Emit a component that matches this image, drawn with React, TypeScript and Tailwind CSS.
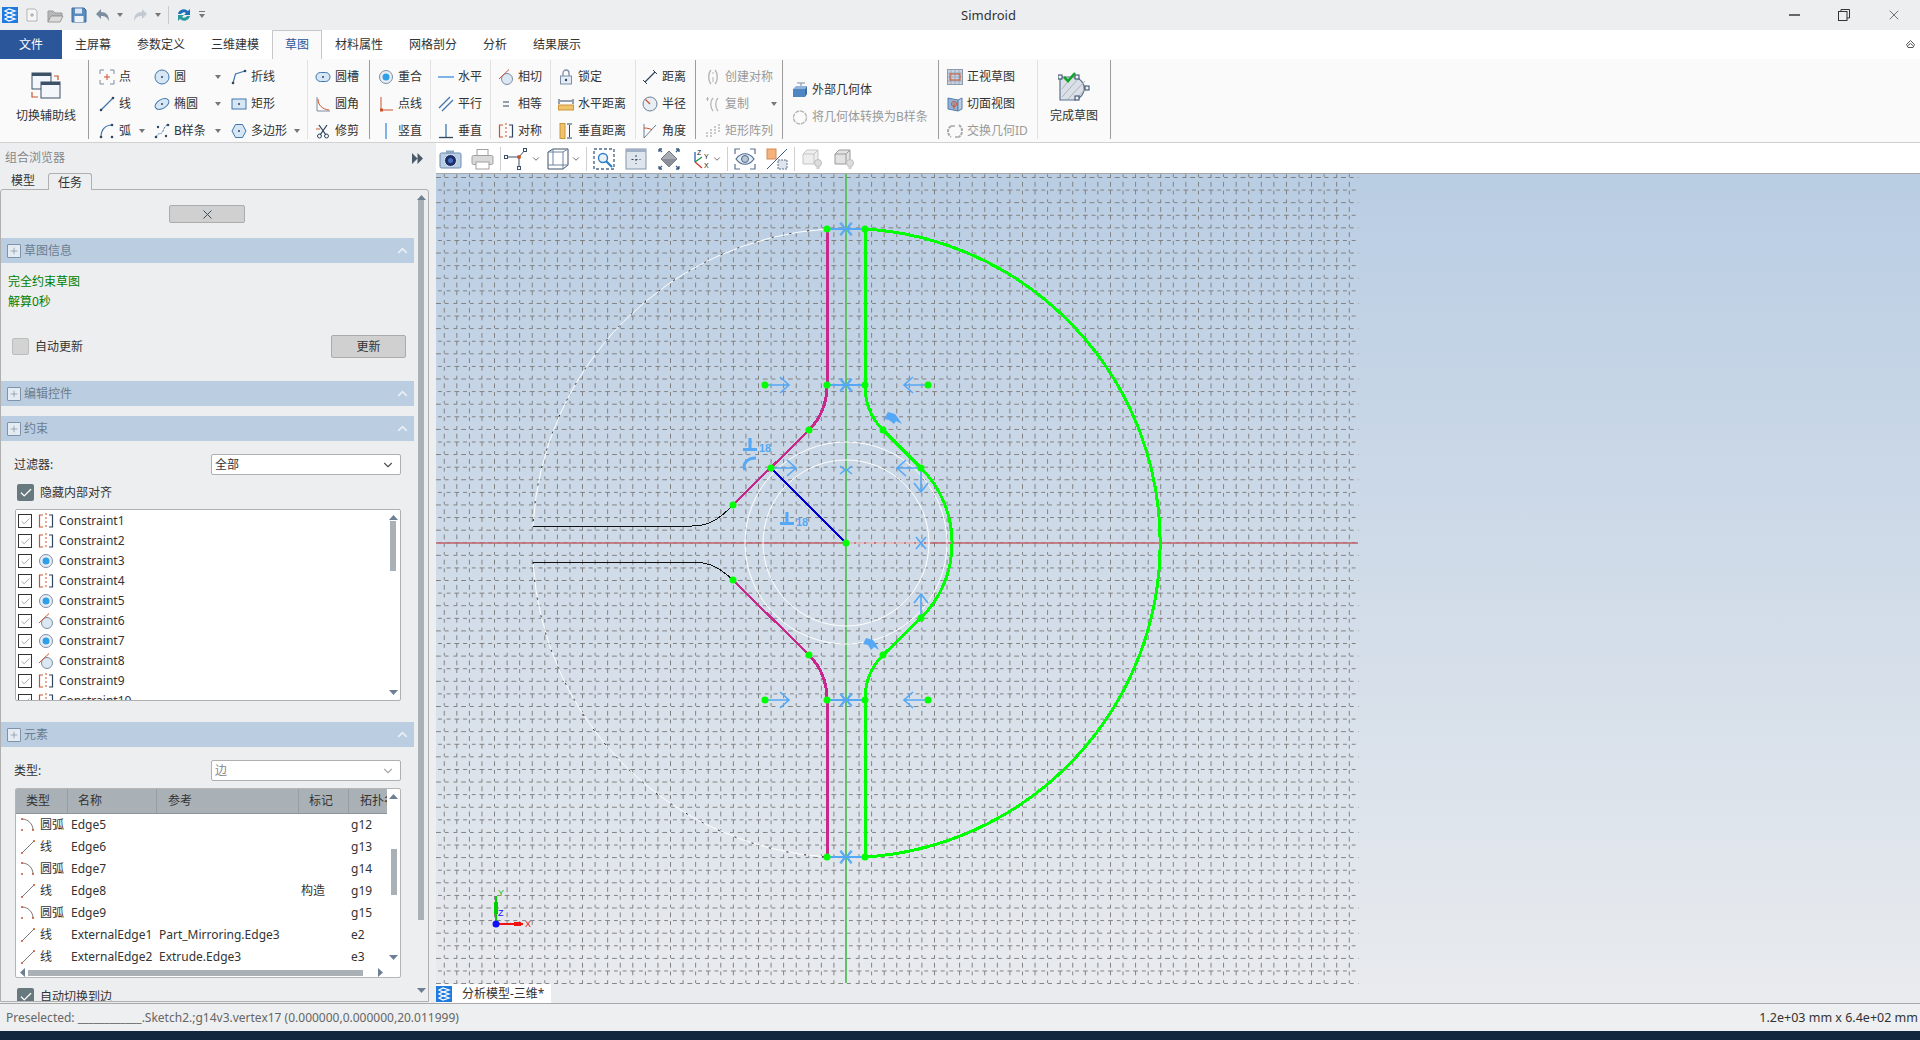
import React from 'react';
import { ChevronDown, ChevronUp, Check, X, Plus } from 'lucide-react';

const BLUE = '#3f76ad';
const ORANGE = '#c9542b';
const DARK = '#2f4560';
const CONSTRAINT = '#55a8f5';

type IconProps = { children: React.ReactNode; size?: number; box?: number; className?: string };

const Ico = ({ children, size = 16, box = 16, className = '' }: IconProps) => (
  <svg width={size} height={size} viewBox={`0 0 ${box} ${box}`} fill="none" className={`shrink-0 ${className}`}>
    {children}
  </svg>
);

const Caret = ({ className = '' }: { className?: string }) => (
  <svg width="6" height="4" viewBox="0 0 6 4" className={`shrink-0 ${className}`}>
    <path d="M0 0h6L3 4z" fill="#777" />
  </svg>
);

// ---- sketch ribbon icons ----
const PointIcon = () => (
  <Ico>
    <path d="M1 5V1h4M11 1h4v4M15 11v4h-4M5 15H1v-4" stroke="#7d8da0" />
    <path d="M8 5v6M5 8h6" stroke={ORANGE} />
  </Ico>
);
const CircleIcon = () => (
  <Ico>
    <circle cx="8" cy="8" r="7" fill="#d7e6f5" stroke={BLUE} />
    <circle cx="8" cy="8" r="1" fill={DARK} />
  </Ico>
);
const PolylineIcon = () => (
  <Ico>
    <path d="M2 14 4.500 5 14 2" stroke={BLUE} strokeWidth="1.200" />
    <circle cx="2" cy="14" r="1.300" fill={DARK} />
    <circle cx="14" cy="2" r="1.300" fill={DARK} />
  </Ico>
);
const LineIcon = () => (
  <Ico>
    <path d="M2 14 14 2" stroke={BLUE} strokeWidth="1.200" />
    <circle cx="2" cy="14" r="1.300" fill={DARK} />
    <circle cx="14" cy="2" r="1.300" fill={DARK} />
  </Ico>
);
const EllipseIcon = () => (
  <Ico>
    <ellipse cx="8" cy="8" rx="7.500" ry="4.500" transform="rotate(-30 8 8)" fill="#d7e6f5" stroke={BLUE} />
    <circle cx="8" cy="8" r="1" fill={DARK} />
  </Ico>
);
const RectIcon = () => (
  <Ico>
    <rect x="1" y="3" width="14" height="10" fill="#d7e6f5" stroke={BLUE} />
    <circle cx="8" cy="8" r="1" fill={DARK} />
  </Ico>
);
const ArcIcon = () => (
  <Ico>
    <path d="M2 14C2 7 6 2 13 2" stroke={BLUE} strokeWidth="1.200" />
    <circle cx="2" cy="14" r="1.300" fill={DARK} />
    <circle cx="13" cy="14" r="1.300" fill={DARK} />
    <circle cx="13" cy="2" r="1.300" fill={DARK} />
  </Ico>
);
const SplineIcon = () => (
  <Ico>
    <path d="M2 14C5 8 7 13 9 8s3-6 5-6" stroke={BLUE} strokeDasharray="2 1" />
    <circle cx="2" cy="14" r="1.300" fill={DARK} />
    <circle cx="14" cy="2" r="1.300" fill={DARK} />
    <circle cx="4" cy="4" r="1.200" fill={DARK} />
    <circle cx="12" cy="13" r="1.200" fill={DARK} />
  </Ico>
);
const PolygonIcon = () => (
  <Ico>
    <path d="M4.500 1.500h7L15 8l-3.500 6.500h-7L1 8z" fill="#d7e6f5" stroke={BLUE} />
    <circle cx="8" cy="8" r="1" fill={DARK} />
  </Ico>
);
const SlotIcon = () => (
  <Ico>
    <rect x="1" y="3.500" width="14" height="9" rx="4.500" fill="#d7e6f5" stroke={BLUE} />
    <circle cx="8" cy="8" r="1" fill={DARK} />
  </Ico>
);
const FilletIcon = () => (
  <Ico>
    <path d="M2 1v14h13" stroke="#7d8da0" />
    <path d="M3 3c0 6 4 10 11 11" stroke={ORANGE} />
  </Ico>
);
const TrimIcon = () => (
  <Ico>
    <path d="M4 2l7 10M12 2 5 12" stroke={DARK} strokeWidth="1.300" />
    <circle cx="4.500" cy="13" r="2" stroke={DARK} />
    <circle cx="11.500" cy="13" r="2" stroke={DARK} />
    <path d="M1 6h4" stroke={ORANGE} />
  </Ico>
);
const CoincidentIcon = () => (
  <Ico>
    <circle cx="8" cy="8" r="6.500" fill="#e9eef4" stroke="#7c8ea3" />
    <circle cx="8" cy="8" r="3.500" fill="#2f9fe8" />
  </Ico>
);
const PointLineIcon = () => (
  <Ico>
    <path d="M3 1v13h12" stroke={ORANGE} />
    <rect x="2" y="12.500" width="3" height="3" fill={ORANGE} />
  </Ico>
);
const VerticalIcon = () => (
  <Ico>
    <rect x="7" y="0" width="2" height="16" fill="#7db3e6" />
  </Ico>
);
const HorizontalIcon = () => (
  <Ico>
    <rect x="0" y="7" width="16" height="2" fill="#7db3e6" />
  </Ico>
);
const ParallelIcon = () => (
  <Ico>
    <path d="M1 12 12 1M4 15 15 4" stroke={BLUE} strokeWidth="1.300" />
  </Ico>
);
const PerpIcon = () => (
  <Ico>
    <path d="M8 1v13" stroke={BLUE} strokeWidth="1.300" />
    <path d="M1 14.500h14" stroke={DARK} strokeWidth="1.300" />
  </Ico>
);
const TangentIcon = () => (
  <Ico>
    <circle cx="9" cy="10" r="5.500" fill="#dbe7f3" stroke="#7c8ea3" />
    <path d="M1 10 11 0.500" stroke={ORANGE} />
  </Ico>
);
const EqualIcon = () => (
  <Ico>
    <path d="M5 6h6M5 10h6" stroke={DARK} />
  </Ico>
);
const SymmetryIcon = () => (
  <Ico>
    <path d="M5 2H1.500v12H5" stroke={ORANGE} strokeWidth="1.200" />
    <path d="M11 2h3.500v12H11" stroke={DARK} strokeWidth="1.200" />
    <path d="M8 0v16" stroke={ORANGE} strokeDasharray="2 2" />
  </Ico>
);
const LockIcon = () => (
  <Ico>
    <path d="M5 7V4a3 3 0 0 1 6 0v3" stroke="#7c8ea3" strokeWidth="1.300" />
    <rect x="2.500" y="7" width="11" height="8" fill="#e4ecf5" stroke="#7c8ea3" />
    <circle cx="8" cy="11" r="1.200" fill={DARK} />
  </Ico>
);
const HDistIcon = () => (
  <Ico>
    <path d="M1 3v5M15 3v5M2 5h12" stroke={DARK} />
    <rect x="0.500" y="9" width="15" height="5" fill="#f0c36a" stroke="#c9963a" />
  </Ico>
);
const VDistIcon = () => (
  <Ico>
    <rect x="2" y="0.500" width="5" height="15" fill="#f0c36a" stroke="#c9963a" />
    <path d="M9 1h5M9 15h5M11.500 2v12" stroke={DARK} />
  </Ico>
);
const DistIcon = () => (
  <Ico>
    <path d="M3 13 13 3" stroke={DARK} strokeWidth="1.200" />
    <path d="M1 11l4 4M11 1l4 4" stroke={DARK} />
  </Ico>
);
const RadiusIcon = () => (
  <Ico>
    <circle cx="8" cy="8" r="7" fill="#e9eef4" stroke="#6d7f92" />
    <path d="M8 8 3.500 3.500" stroke={ORANGE} strokeWidth="1.200" />
  </Ico>
);
const AngleIcon = () => (
  <Ico>
    <path d="M2 1v14M2 15 14 2" stroke="#6d7f92" />
    <path d="M2 5c4 0 7 1 8 2" stroke={ORANGE} />
  </Ico>
);
const GreyArcs = () => (
  <Ico>
    <path d="M6 1C3 4 3 12 6 15M10 1c3 3 3 11 0 14" stroke="#b5b5b5" strokeWidth="1.300" />
    <path d="M8 3v2M8 8v5" stroke="#b5b5b5" />
  </Ico>
);
const GreyCopy = () => (
  <Ico>
    <path d="M8 2C5 5 5 11 8 15M13 2c-3 3-3 9 0 13" stroke="#b5b5b5" strokeWidth="1.300" />
    <path d="M1 3h3M2.500 1v4" stroke="#b5b5b5" />
  </Ico>
);
const GreyArray = () => (
  <Ico>
    <path d="M2 9v6M6 6v9M10 3v9M14 1v9" stroke="#b5b5b5" strokeDasharray="2 1" strokeWidth="1.400" />
  </Ico>
);
const ExternalIcon = () => (
  <Ico>
    <path d="M1 7l3-3h11l-2 3z" fill="#8fb3da" />
    <rect x="1" y="7" width="12" height="8" fill="#4f85c0" />
    <path d="M13 7l2-3v8l-2 3z" fill="#3a6ca3" />
    <path d="M5 1h8M9 1v3" stroke="#7c8ea3" />
  </Ico>
);
const GreyCircleIcon = () => (
  <Ico>
    <circle cx="8" cy="8.500" r="6.500" stroke="#b5b5b5" strokeWidth="1.400" strokeDasharray="4 1" />
  </Ico>
);
const FrontViewIcon = () => (
  <Ico>
    <rect x="0.500" y="0.500" width="15" height="15" fill="#c9d3e0" stroke="#8b9bb0" />
    <path d="M4 1v14M8 1v14M12 1v14M1 4h14M1 8h14M1 12h14" stroke="#9babc0" />
    <rect x="3" y="5" width="10" height="6" stroke={ORANGE} />
  </Ico>
);
const SectionIcon = () => (
  <Ico>
    <path d="M1 2l10 2v11L1 13z" fill="#8fb3da" stroke="#5a7fa8" />
    <path d="M11 4l4-2v11l-4 2z" fill="#b9cde3" stroke="#5a7fa8" />
    <circle cx="7" cy="8" r="2.500" stroke={ORANGE} />
    <path d="M7 7v6" stroke={ORANGE} />
  </Ico>
);
const SwapIcon = () => (
  <Ico>
    <path d="M4 3C0 6 0 11 4 14M12 2c4 3 4 9 0 12" stroke="#a8a8a8" strokeWidth="2" strokeDasharray="3 1" />
    <path d="M4 3h4M8 14h4" stroke="#a8a8a8" strokeWidth="1.400" />
  </Ico>
);
const ToggleIcon = () => (
  <svg width="30" height="28" viewBox="0 0 30 28" fill="none" className="shrink-0">
    <rect x="1" y="1" width="19" height="16" fill="#f3f6fa" stroke="#3c5068" />
    <rect x="1" y="1" width="19" height="3" fill="#3c5068" />
    <rect x="10" y="10" width="19" height="16" fill="#f3f6fa" stroke="#3c5068" />
    <rect x="10" y="10" width="19" height="3" fill="#3c5068" />
    <path d="M23 4h4v4" stroke={ORANGE} strokeWidth="1.200" />
    <path d="M1 20v5h6" stroke={ORANGE} strokeWidth="1.200" />
  </svg>
);
const FinishIcon = () => (
  <svg width="32" height="30" viewBox="0 0 32 30" fill="none" className="shrink-0">
    <path d="M2 6h15a13 12 0 0 1 0 23H2z" fill="#dbe0e7" stroke="#5b7190" strokeWidth="1.200" />
    <path d="M4 18 12 8M4 26 20 8M10 28 27 10M18 28 29 16" stroke="#a9b3bf" />
    <rect x="0" y="4" width="4" height="4" fill="#eef2f7" stroke={DARK} />
    <rect x="17" y="4" width="4" height="4" fill="#eef2f7" stroke={DARK} />
    <rect x="27" y="15" width="4" height="4" fill="#eef2f7" stroke={DARK} />
    <rect x="17" y="25" width="4" height="4" fill="#eef2f7" stroke={DARK} />
    <path d="M6 6l4 4 7-8" stroke="#12a329" strokeWidth="2.600" />
  </svg>
);

// ---- viewport toolbar icons ----
const CameraIcon = () => (
  <Ico size={23} box={23} className="ml-[3px]">
    <rect x="1" y="5" width="21" height="15" rx="1.500" fill="#b9cde3" stroke="#6a8bb0" />
    <rect x="7" y="2.500" width="8" height="3" fill="#8aa6c6" />
    <circle cx="11.500" cy="12.500" r="6" fill="#1c2f68" stroke="#dfe8f2" />
    <circle cx="11.500" cy="12.500" r="2.500" fill="#4c6fc0" />
  </Ico>
);
const PrinterIcon = () => (
  <Ico size={23} box={23} className="ml-[9px]">
    <rect x="6" y="1.500" width="11" height="6" fill="#fff" stroke="#a0a0a0" />
    <rect x="1" y="7.500" width="21" height="9" rx="1.500" fill="#d9d9d9" stroke="#a0a0a0" />
    <rect x="5" y="14" width="13" height="7" fill="#fff" stroke="#a0a0a0" />
  </Ico>
);
const NodeIcon = () => (
  <Ico size={24} box={24} className="ml-[3px]">
    <path d="M2 10h13v11M15 10l6-7" stroke="#3c5068" />
    <rect x="0.500" y="8.500" width="3" height="3" fill="#fff" stroke="#3c5068" />
    <rect x="13.500" y="19.500" width="3" height="3" fill="#fff" stroke="#3c5068" />
    <rect x="19.500" y="1.500" width="3" height="3" fill="#fff" stroke="#3c5068" />
    <circle cx="15" cy="10" r="2" fill={ORANGE} />
  </Ico>
);
const BoxIcon = () => (
  <Ico size={22} box={22} className="ml-[6px]">
    <path d="M1 4l5-3h15v16l-5 4H1z" stroke="#3c5068" />
    <path d="M1 4h15v17M16 4l5-3M6 1v16H1M6 17h15" stroke="#6d84a0" />
  </Ico>
);
const ZoomBoxIcon = () => (
  <Ico size={22} box={22} className="ml-[6px]">
    <rect x="1" y="1" width="20" height="20" stroke="#4e6a8c" strokeDasharray="3 2" strokeWidth="1.400" />
    <circle cx="10" cy="10" r="4.500" fill="#e8f0f8" stroke="#2f7fc4" strokeWidth="1.400" />
    <path d="M13 13l6 6" stroke="#2f7fc4" strokeWidth="2.200" />
  </Ico>
);
const FitIcon = () => (
  <Ico size={22} box={22} className="ml-[10px]">
    <rect x="1" y="1" width="20" height="20" fill="#dfe5ed" stroke="#8095ad" />
    <rect x="1" y="1" width="20" height="3" fill="#9fb0c4" />
    <path d="M11 7v9M6.500 11.500h9" stroke={DARK} strokeDasharray="2 2" />
  </Ico>
);
const DiamondIcon = () => (
  <Ico size={22} box={22} className="ml-[11px]">
    <path d="M11 3l8 8-8 8-8-8z" fill="#a9adb3" stroke="#6f7680" />
    <path d="M3 11h16l-8 8z" fill="#8b9098" />
    <path d="M1 1l3 3M21 1l-3 3M1 21l3-3M21 21l-3-3M1 1h3M1 1v3M21 1h-3M21 1v3M1 21h3M1 21v-3M21 21h-3M21 21v-3" stroke="#3c5d85" strokeWidth="1.300" />
  </Ico>
);
const TriadIcon = () => (
  <svg width="20" height="22" viewBox="0 0 20 22" fill="none" className="shrink-0 ml-[11px]">
    <path d="M4 14V4" stroke="#2563b5" strokeWidth="1.300" />
    <path d="M4 14l7-5" stroke="#1a9a3a" strokeWidth="1.300" />
    <path d="M4 14l7 6" stroke="#d9302a" strokeWidth="1.300" />
    <text x="6" y="7" fontSize="7" fill="#222" fontFamily="Liberation Sans">Z</text>
    <text x="13" y="11" fontSize="7" fill="#222" fontFamily="Liberation Sans">Y</text>
    <text x="13" y="20" fontSize="7" fill="#222" fontFamily="Liberation Sans">X</text>
  </svg>
);
const EyeIcon = () => (
  <Ico size={22} box={22} className="ml-[6px]">
    <path d="M1 6V1h5M16 1h5v5M21 16v5h-5M6 21H1v-5" stroke="#5b7190" strokeWidth="1.200" />
    <path d="M2 11c5-7 13-7 18 0-5 7-13 7-18 0z" fill="#e4ecf5" stroke="#4e6a8c" strokeWidth="1.200" />
    <circle cx="11" cy="11" r="3.500" fill="#b8c6d6" stroke="#4e6a8c" />
  </Ico>
);
const SwapShadeIcon = () => (
  <Ico size={22} box={22} className="ml-[10px]">
    <rect x="1" y="1" width="9" height="10" fill="#f3b27e" stroke="#d58a4f" />
    <path d="M1 21 21 1" stroke="#3c5d85" />
    <rect x="12" y="12" width="9" height="9" fill="#dfe5ed" stroke="#5b7190" strokeDasharray="2 1" />
  </Ico>
);
const GhostCube = ({ className = '', dark }: { className?: string; dark?: boolean }) => (
  <Ico size={22} box={22} className={className}>
    <path d="M2 6l4-4h11v11l-4 3H2z" fill={dark ? '#e2e2e2' : '#eeeeee'} stroke={dark ? '#9a9a9a' : '#c5c5c5'} />
    <path d="M2 6h11v10M13 6l4-4" stroke={dark ? '#9a9a9a' : '#c5c5c5'} />
    <circle cx="17" cy="15" r="3.500" fill="#dddddd" stroke="#bdbdbd" />
    <rect x="15.500" y="18" width="3" height="3" fill="#cccccc" />
  </Ico>
);

// ---- app logo ----
const AppLogo = ({ size = 16 }: { size?: number }) => (
  <svg width={size} height={size} viewBox="0 0 16 16" className="shrink-0">
    <rect width="16" height="16" fill="#1f7ae0" />
    <path d="M3 4l4-2 6 2-6 2zM3 8l4-2 6 2-6 2zM3 12l4-2 6 2-6 2z" fill="none" stroke="#fff" strokeWidth="1.200" />
  </svg>
);

// ---- ribbon parts ----
const Item = ({ icon, label, muted, children }: { icon: React.ReactNode; label: string; muted?: boolean; children?: React.ReactNode }) => (
  <div className={`flex items-center gap-[4px] h-[27px] shrink-0 whitespace-nowrap ${muted ? 'text-[#999999]' : 'text-[#333333]'}`}>
    {icon}
    <span>{label}</span>
    {children}
  </div>
);

const Group = ({ width, dark, children }: { width: string; dark?: boolean; children: React.ReactNode }) => (
  <div className={`flex h-[79px] pt-[3px] border-r shrink-0 ${width} ${dark ? 'border-[#9c9c9c]' : 'border-[#e2e2e2]'}`}>
    {children}
  </div>
);

const Ribbon = () => (
  <div className="flex h-[85px] shrink-0 bg-[#fafafa] border-y border-[#d0d0d0] pt-px">
    <Group width="w-[89px]" dark>
      <div className="flex flex-col items-center w-full pt-[9px] pl-[4px] gap-[8px]">
        <ToggleIcon />
        <span className="text-[#333333]">切换辅助线</span>
      </div>
    </Group>
    <Group width="w-[219px]">
      <div className="flex flex-col w-[65px] pl-[10px]">
        <Item icon={<PointIcon />} label="点" />
        <Item icon={<LineIcon />} label="线" />
        <Item icon={<ArcIcon />} label="弧"><Caret className="ml-auto mr-[9px]" /></Item>
      </div>
      <div className="flex flex-col w-[77px]">
        <Item icon={<CircleIcon />} label="圆"><Caret className="ml-auto mr-[10px]" /></Item>
        <Item icon={<EllipseIcon />} label="椭圆"><Caret className="ml-auto mr-[10px]" /></Item>
        <Item icon={<SplineIcon />} label="B样条"><Caret className="ml-auto mr-[10px]" /></Item>
      </div>
      <div className="flex flex-col flex-1">
        <Item icon={<PolylineIcon />} label="折线" />
        <Item icon={<RectIcon />} label="矩形" />
        <Item icon={<PolygonIcon />} label="多边形"><Caret className="ml-auto mr-[7px]" /></Item>
      </div>
    </Group>
    <Group width="w-[62px]" dark>
      <div className="flex flex-col pl-[7px]">
        <Item icon={<SlotIcon />} label="圆槽" />
        <Item icon={<FilletIcon />} label="圆角" />
        <Item icon={<TrimIcon />} label="修剪" />
      </div>
    </Group>
    <Group width="w-[61px]">
      <div className="flex flex-col pl-[8px]">
        <Item icon={<CoincidentIcon />} label="重合" />
        <Item icon={<PointLineIcon />} label="点线" />
        <Item icon={<VerticalIcon />} label="竖直" />
      </div>
    </Group>
    <Group width="w-[60px]">
      <div className="flex flex-col pl-[7px]">
        <Item icon={<HorizontalIcon />} label="水平" />
        <Item icon={<ParallelIcon />} label="平行" />
        <Item icon={<PerpIcon />} label="垂直" />
      </div>
    </Group>
    <Group width="w-[60px]">
      <div className="flex flex-col pl-[7px]">
        <Item icon={<TangentIcon />} label="相切" />
        <Item icon={<EqualIcon />} label="相等" />
        <Item icon={<SymmetryIcon />} label="对称" />
      </div>
    </Group>
    <Group width="w-[85px]">
      <div className="flex flex-col pl-[7px]">
        <Item icon={<LockIcon />} label="锁定" />
        <Item icon={<HDistIcon />} label="水平距离" />
        <Item icon={<VDistIcon />} label="垂直距离" />
      </div>
    </Group>
    <Group width="w-[60px]" dark>
      <div className="flex flex-col pl-[6px]">
        <Item icon={<DistIcon />} label="距离" />
        <Item icon={<RadiusIcon />} label="半径" />
        <Item icon={<AngleIcon />} label="角度" />
      </div>
    </Group>
    <Group width="w-[87px]" dark>
      <div className="flex flex-col flex-1 pl-[9px]">
        <Item icon={<GreyArcs />} label="创建对称" muted />
        <Item icon={<GreyCopy />} label="复制" muted><Caret className="ml-auto mr-[5px]" /></Item>
        <Item icon={<GreyArray />} label="矩形阵列" muted />
      </div>
    </Group>
    <Group width="w-[156px]" dark>
      <div className="flex flex-col pt-[13px] pl-[9px]">
        <Item icon={<ExternalIcon />} label="外部几何体" />
        <Item icon={<GreyCircleIcon />} label="将几何体转换为B样条" muted />
      </div>
    </Group>
    <Group width="w-[99px]">
      <div className="flex flex-col pl-[8px]">
        <Item icon={<FrontViewIcon />} label="正视草图" />
        <Item icon={<SectionIcon />} label="切面视图" />
        <Item icon={<SwapIcon />} label="交换几何ID" muted />
      </div>
    </Group>
    <Group width="w-[73px]" dark>
      <div className="flex flex-col items-center w-full pt-[8px] gap-[7px]">
        <FinishIcon />
        <span className="text-[#333333]">完成草图</span>
      </div>
    </Group>
  </div>
);

const TitleBar = () => (
  <div className="flex items-center h-[30px] shrink-0 bg-[#edeef0] relative">
    <div className="flex items-center pl-[2px] gap-[7px] w-[220px]">
      <AppLogo />
      <Ico size={14} box={14}>
        <path d="M2 1h8l2 2v10H2z" fill="#f6f6f6" stroke="#b5b5b5" />
        <path d="M7 5v4M5 7h4" stroke="#a0a0a0" />
      </Ico>
      <Ico size={17} box={17} className="ml-[1px]">
        <path d="M1 4h5l2 2h7v3H5l-4 6z" fill="#b8b8b8" stroke="#999" />
        <path d="M1 15l3-6h12l-3 6z" fill="#dcdcdc" stroke="#999" />
      </Ico>
      <Ico size={16} box={16}>
        <path d="M1 1h12l2 2v12H1z" fill="#5a8cc0" stroke="#3f6d9e" />
        <rect x="4" y="1.500" width="7" height="5" fill="#dce8f4" />
        <rect x="3.500" y="9" width="9" height="6" fill="#eef3f8" />
      </Ico>
      <Ico size={16} box={16} className="ml-[1px]">
        <path d="M6 2 1 7l5 5V9c4 0 6 1 8 5 0-6-3-9-8-9z" fill="#7d8ea1" />
      </Ico>
      <Caret className="-ml-[1px]" />
      <Ico size={16} box={16} className="ml-[2px]">
        <path d="M10 2l5 5-5 5V9C6 9 4 10 2 14c0-6 3-9 8-9z" fill="#c3c9d0" />
      </Ico>
      <Caret />
      <div className="w-px h-[18px] bg-[#c9c9c9]" />
      <Ico size={16} box={16}>
        <path d="M2 7a6 6 0 0 1 10-3l2-2v6H8l2-2a3.500 3.500 0 0 0-5 1z" fill="#1f6fb8" />
        <path d="M14 9a6 6 0 0 1-10 3l-2 2V8h6L6 10a3.500 3.500 0 0 0 5-1z" fill="#2a9a9f" />
      </Ico>
      <svg width="6" height="8" viewBox="0 0 6 8" className="shrink-0">
        <path d="M0 0h6v1H0zM0 3h6L3 7z" fill="#777" />
      </svg>
    </div>
    <div className="flex-1" />
    <span className="absolute left-[961px] top-[7px] text-[13px] leading-[16px] text-[#333333]">Simdroid</span>
    <div className="flex items-center">
      <div className="w-[50px] flex justify-center"><div className="w-[11px] h-[2px] bg-[#666666]" /></div>
      <div className="w-[50px] flex justify-center">
        <Ico size={12} box={12}>
          <path d="M3 2.500V.5h8.500V9H9" stroke="#333" />
          <rect x="0.500" y="2.500" width="8.500" height="9" stroke="#333" />
        </Ico>
      </div>
      <div className="w-[51px] flex justify-center pr-[2px]"><X size={16} strokeWidth={1.100} color="#444" /></div>
    </div>
  </div>
);

const tabs = ['主屏幕', '参数定义', '三维建模', '草图', '材料属性', '网格剖分', '分析', '结果展示'];

const TabBar = () => (
  <div className="flex h-[29px] shrink-0 bg-white relative -mb-px">
    <div className="w-[62px] bg-[#2b579a] text-white flex items-center justify-center">文件</div>
    {tabs.map((t) => (
      <div
        key={t}
        className={`px-[12px] flex items-center border-x border-t ${t === '草图' ? 'text-[#2b579a] border-[#c8c8c8] bg-[#fafafa] z-10 h-[29px]' : 'text-[#333333] border-transparent'}`}
      >
        {t}
      </div>
    ))}
    <div className="ml-auto mr-[5px] flex items-center">
      <svg width="9" height="9" viewBox="0 0 9 9" fill="none"><path d="M.5 4.500 4.500.5l4 4-1.500 3H2zM2 5.500l2.500-2 2.500 2" stroke="#555" /></svg>
    </div>
  </div>
);

// ---- sidebar parts ----
const SectionHeader = ({ title, className = '' }: { title: string; className?: string }) => (
  <div className={`h-[25px] bg-[#bbcee1] flex items-center pl-[6px] pr-[4px] shrink-0 ${className}`}>
    <div className="w-[14px] h-[14px] border border-[#7f93a8] bg-[#e4ebf2] flex items-center justify-center rounded-[1px]">
      <Plus size={10} color="#5f6f80" strokeWidth={1.200} />
    </div>
    <span className="ml-[3px] text-[#6b7c8e]">{title}</span>
    <ChevronUp size={15} color="#e6edf5" strokeWidth={3} className="ml-auto" />
  </div>
);

const FilledCheck = ({ className = '' }: { className?: string }) => (
  <div className={`w-[17px] h-[17px] rounded-[2px] bg-[#68787f] flex items-center justify-center shrink-0 ${className}`}>
    <Check size={14} color="#ffffff" strokeWidth={2.200} />
  </div>
);

const SelectBox = ({ value, muted }: { value: string; muted?: boolean }) => (
  <div className="w-[190px] h-[21px] bg-white border border-[#b0b0b0] rounded-[2px] flex items-center pl-[3px] pr-[5px]">
    <span className={muted ? 'text-[#888888]' : 'text-[#333333]'}>{value}</span>
    <ChevronDown size={14} color={muted ? '#aaaaaa' : '#555555'} className="ml-auto" />
  </div>
);

const constraintKinds = ['sym', 'sym', 'co', 'sym', 'co', 'tan', 'co', 'tan', 'sym', 'sym'];

const ConstraintRow = ({ index, kind }: { index: number; kind: string }) => (
  <div className="h-[20px] flex items-center pl-[2px] shrink-0">
    <div className="w-[14px] h-[14px] border border-[#333333] bg-white flex items-center justify-center shrink-0">
      <Check size={11} color="#444444" strokeWidth={1} />
    </div>
    <div className="ml-[6px] w-[16px] shrink-0 flex justify-center">
      {kind === 'sym' && <SymmetryIcon />}
      {kind === 'co' && <CoincidentIcon />}
      {kind === 'tan' && <TangentIcon />}
    </div>
    <span className="ml-[5px] text-[#333333]">Constraint{index}</span>
  </div>
);

const ScrollUp = ({ color = '#6d7f92' }: { color?: string }) => (
  <svg width="9" height="5" viewBox="0 0 9 5" className="shrink-0"><path d="M0 5 4.500 0 9 5z" fill={color} /></svg>
);
const ScrollDown = ({ color = '#6d7f92' }: { color?: string }) => (
  <svg width="9" height="5" viewBox="0 0 9 5" className="shrink-0"><path d="M0 0h9L4.500 5z" fill={color} /></svg>
);

const ArcRowIcon = () => (
  <Ico size={14} box={14}>
    <path d="M1 1c6 0 11 5 11 11" stroke="#777" />
    <circle cx="1" cy="1" r="1" fill={ORANGE} />
    <circle cx="1" cy="12" r="1" fill={ORANGE} />
    <circle cx="12" cy="12" r="1" fill={ORANGE} />
  </Ico>
);
const LineRowIcon = () => (
  <Ico size={14} box={14}>
    <path d="M1 13 13 1" stroke="#777" />
    <circle cx="1" cy="13" r="1" fill={ORANGE} />
    <circle cx="13" cy="1" r="1" fill={ORANGE} />
  </Ico>
);

const edgeRows = [
  { arc: true, type: '圆弧', name: 'Edge5', ref: '', mark: '', topo: 'g12' },
  { arc: false, type: '线', name: 'Edge6', ref: '', mark: '', topo: 'g13' },
  { arc: true, type: '圆弧', name: 'Edge7', ref: '', mark: '', topo: 'g14' },
  { arc: false, type: '线', name: 'Edge8', ref: '', mark: '构造', topo: 'g19' },
  { arc: true, type: '圆弧', name: 'Edge9', ref: '', mark: '', topo: 'g15' },
  { arc: false, type: '线', name: 'ExternalEdge1', ref: 'Part_Mirroring.Edge3', mark: '', topo: 'e2' },
  { arc: false, type: '线', name: 'ExternalEdge2', ref: 'Extrude.Edge3', mark: '', topo: 'e3' },
];

const EdgeTable = () => (
  <div className="mt-[7px] ml-[14px] w-[386px] h-[190px] bg-white border border-[#b5b5b5] rounded-[2px] flex overflow-hidden shrink-0">
    <div className="w-[371px] flex flex-col shrink-0 overflow-hidden">
      <div className="flex h-[25px] bg-[#aab1b6] border-b border-[#8d9499] shrink-0 text-[#333333] whitespace-nowrap">
        <div className="w-[52px] border-r border-[#979ea3] pl-[10px] flex items-center shrink-0">类型</div>
        <div className="w-[89px] border-r border-[#979ea3] pl-[10px] flex items-center shrink-0">名称</div>
        <div className="w-[142px] border-r border-[#979ea3] pl-[11px] flex items-center shrink-0">参考</div>
        <div className="w-[50px] border-r border-[#979ea3] pl-[10px] flex items-center shrink-0">标记</div>
        <div className="w-[38px] pl-[11px] flex items-center shrink-0 overflow-hidden">拓扑名</div>
      </div>
      <div className="h-[154px] shrink-0">
        {edgeRows.map((r) => (
          <div key={r.name} className="flex items-center h-[22px] text-[#333333] whitespace-nowrap">
            <div className="w-[55px] pl-[5px] flex items-center gap-[5px] shrink-0">
              {r.arc ? <ArcRowIcon /> : <LineRowIcon />}
              <span>{r.type}</span>
            </div>
            <div className="w-[88px] shrink-0">{r.name}</div>
            <div className="w-[142px] shrink-0">{r.ref}</div>
            <div className="w-[50px] shrink-0">{r.mark}</div>
            <div>{r.topo}</div>
          </div>
        ))}
      </div>
      <div className="h-[9px] flex items-center pl-[4px] shrink-0">
        <svg width="5" height="9" viewBox="0 0 5 9" className="shrink-0"><path d="M5 0v9L0 4.500z" fill="#6d7f92" /></svg>
        <div className="ml-[3px] w-[335px] h-[6px] bg-[#aab1b6]" />
        <svg width="5" height="9" viewBox="0 0 5 9" className="shrink-0 ml-[15px]"><path d="M0 0v9l5-4.500z" fill="#6d7f92" /></svg>
      </div>
    </div>
    <div className="flex-1 flex flex-col items-center pt-[5px]">
      <ScrollUp />
      <div className="w-[6px] h-[46px] bg-[#aab1b6] mt-[50px]" />
      <div className="mt-[60px]"><ScrollDown /></div>
    </div>
  </div>
);

const Sidebar = () => (
  <aside className="w-[436px] shrink-0 bg-[#edeef0] flex flex-col">
    <div className="h-[30px] flex items-center justify-between pl-[5px] pr-[13px] shrink-0">
      <span className="text-[#888888]">组合浏览器</span>
      <svg width="11" height="11" viewBox="0 0 11 11"><path d="M0 0l5.500 5.500L0 11zM5.500 0 11 5.500 5.500 11z" fill="#4a5a6a" /></svg>
    </div>
    <div className="flex h-[17px] shrink-0 relative z-10 -mb-px">
      <span className="pl-[11px] w-[48px] text-[#333333]">模型</span>
      <span className="w-[44px] bg-[#edeef0] border-x border-t border-[#b0b0b0] rounded-t-[3px] text-center text-[#333333] leading-[18px]">任务</span>
    </div>
    <div className="w-[429px] h-[813px] border border-[#b0b0b0] rounded-t-[3px] flex overflow-hidden shrink-0">
      <div className="w-[413px] shrink-0 flex flex-col">
        <div className="mt-[15px] ml-[168px] w-[76px] h-[18px] bg-[#d0d0d0] border border-[#ababab] rounded-[2px] flex items-center justify-center shrink-0">
          <X size={15} color="#3c4d5e" strokeWidth={1.600} />
        </div>
        <SectionHeader title="草图信息" className="mt-[15px]" />
        <div className="mt-[9px] ml-[7px] text-[#008000] leading-[20px]">
          <div>完全约束草图</div>
          <div>解算0秒</div>
        </div>
        <div className="mt-[23px] flex items-center h-[23px] shrink-0">
          <div className="ml-[11px] w-[17px] h-[17px] rounded-[2px] bg-[#d3d3d3] border border-[#bdbdbd]" />
          <span className="ml-[6px] text-[#333333]">自动更新</span>
          <div className="ml-auto mr-[8px] w-[75px] h-[23px] bg-[#d0d0d0] border border-[#ababab] rounded-[2px] flex items-center justify-center text-[#333333]">更新</div>
        </div>
        <SectionHeader title="编辑控件" className="mt-[23px]" />
        <SectionHeader title="约束" className="mt-[10px]" />
        <div className="mt-[13px] flex items-center h-[21px] shrink-0">
          <span className="ml-[13px] w-[197px] text-[#333333]">过滤器:</span>
          <SelectBox value="全部" />
        </div>
        <div className="mt-[9px] flex items-center h-[17px] shrink-0">
          <FilledCheck className="ml-[16px]" />
          <span className="ml-[6px] text-[#333333]">隐藏内部对齐</span>
        </div>
        <div className="mt-[8px] ml-[14px] w-[386px] h-[192px] bg-white border border-[#b0b0b0] rounded-[2px] flex shrink-0 overflow-hidden">
          <div className="flex-1 flex flex-col overflow-hidden pt-px">
            {constraintKinds.map((k, i) => (
              <ConstraintRow key={i} index={i + 1} kind={k} />
            ))}
          </div>
          <div className="w-[12px] flex flex-col items-center pt-[5px] pb-[5px] mr-[1px]">
            <ScrollUp />
            <div className="w-[6px] h-[50px] bg-[#aab1b6] mt-[1px]" />
            <div className="mt-auto"><ScrollDown color="#6d7f92" /></div>
          </div>
        </div>
        <SectionHeader title="元素" className="mt-[21px]" />
        <div className="mt-[13px] flex items-center h-[21px] shrink-0">
          <span className="ml-[13px] w-[197px] text-[#333333]">类型:</span>
          <SelectBox value="边" muted />
        </div>
        <EdgeTable />
        <div className="mt-[10px] flex items-center h-[17px] shrink-0">
          <FilledCheck className="ml-[16px]" />
          <span className="ml-[6px] text-[#333333]">自动切换到边</span>
        </div>
      </div>
      <div className="flex-1 flex flex-col items-center pt-[5px]">
        <ScrollUp />
        <div className="w-[6px] h-[720px] bg-[#aab1b6] shrink-0" />
        <div className="mt-[68px]"><ScrollDown /></div>
      </div>
    </div>
  </aside>
);

const ToolSep = ({ className = '' }: { className?: string }) => <div className={`w-px h-[24px] bg-[#cfcfcf] shrink-0 ${className}`} />;

const ViewToolbar = () => (
  <div className="h-[31px] shrink-0 bg-white border-b border-[#a8a8a8] flex items-center pt-[2px]">
    <CameraIcon />
    <PrinterIcon />
    <ToolSep className="ml-[6px]" />
    <NodeIcon />
    <ChevronDown size={10} color="#555" strokeWidth={2} className="ml-[3px] shrink-0" />
    <BoxIcon />
    <ChevronDown size={10} color="#555" strokeWidth={2} className="ml-[2px] shrink-0" />
    <ToolSep className="ml-[5px]" />
    <ZoomBoxIcon />
    <FitIcon />
    <DiamondIcon />
    <TriadIcon />
    <ChevronDown size={10} color="#555" strokeWidth={2} className="ml-px shrink-0" />
    <ToolSep className="ml-[5px]" />
    <EyeIcon />
    <SwapShadeIcon />
    <ToolSep className="ml-[6px]" />
    <GhostCube className="ml-[6px]" />
    <GhostCube className="ml-[10px]" dark />
  </div>
);

// ---- sketch viewport ----
const Star = ({ y }: { y: number }) => (
  <g stroke={CONSTRAINT} fill="none">
    <path d={`M827 ${y}H865`} strokeWidth="2" />
    <path d={`M840 ${y - 6}l5 6-5 6M852 ${y - 6}l-5 6 5 6`} strokeWidth="1.600" />
    <path d={`M841 ${y - 7}l10 14M851 ${y - 7}l-10 14`} strokeWidth="1" />
  </g>
);

const Arrow = ({ d }: { d: string }) => <path d={d} stroke={CONSTRAINT} strokeWidth="1.600" fill="none" />;

const Perp = ({ x, y }: { x: number; y: number }) => (
  <g>
    <path d={`M${x} ${y}h14v-3h-5.500v-10h-3v10h-5.500z`} fill={CONSTRAINT} />
    <text x={x + 16} y={y + 1} fontSize="11" fontWeight="700" fill={CONSTRAINT} fontFamily="Liberation Sans">18</text>
  </g>
);

const points: [number, number][] = [
  [827, 229], [865, 229], [827, 385], [865, 385], [765, 385], [928, 385],
  [809, 430], [883, 430], [771, 468], [921, 468], [733, 505], [846, 543],
  [921, 618], [733, 580], [809, 655], [883, 655], [827, 700], [865, 700],
  [765, 700], [928, 700], [827, 857], [865, 857],
];

const SketchView = () => (
  <svg width="1484" height="829" viewBox="436 174 1484 829" className="block">
    <defs>
      <pattern id="sketchGrid" patternUnits="userSpaceOnUse" x="846" y="177" width="25.140" height="25.190">
        <g stroke="#7f7f7f" strokeWidth="1" shapeRendering="crispEdges">
          <path d="M1 .5h4M9.400 .5h4M17.800 .5h4" />
          <path d="M2.700 13.100h4M11.100 13.100h4M19.500 13.100h4" />
          <path d="M.5 5.300v4M.5 13.500v4M.5 21.900v3.300M13.100 5.300v4M13.100 13.500v4M13.100 21.900v3.300" />
        </g>
      </pattern>
    </defs>
    <rect x="436" y="174" width="923" height="810" fill="url(#sketchGrid)" />
    {/* axes */}
    <path d="M846 174V983" stroke="#62c06a" strokeWidth="2" />
    <path d="M436 543H1358" stroke="#c0636a" strokeWidth="1.500" />
    {/* construction geometry */}
    <circle cx="846" cy="543" r="101" stroke="#ffffff" fill="none" />
    <circle cx="846" cy="543" r="83" stroke="#ffffff" fill="none" />
    <path d="M846 543H930" stroke="#ffffff" strokeDasharray="8 2" />
    <path d="M827 229A314.600 314.600 0 0 0 533 526M533 562A314.600 314.600 0 0 0 827 857" stroke="#ffffff" fill="none" />
    <path d="M827 229A314.600 314.600 0 0 0 533 526M533 562A314.600 314.600 0 0 0 827 857" stroke="#111111" fill="none" strokeDasharray="2 16" />
    <path d="M533 526H692C712 526 722 516 733 505M533 562H692C712 562 722 570 733 580" stroke="#111111" fill="none" shapeRendering="crispEdges" />
    {/* profile */}
    <g fill="none" shapeRendering="crispEdges">
      <path d="M827 229V385C827 405 820 419 809 430" stroke="#c8288c" strokeWidth="3" />
      <path d="M809 430 733 505M733 580 809 655" stroke="#c8288c" strokeWidth="2.200" />
      <path d="M809 655C820 666 827 680 827 700V857" stroke="#c8288c" strokeWidth="3" />
      <path d="M865 229V385C865 405 872 419 883 430L921 468" stroke="#00ff00" strokeWidth="3" />
      <path d="M921 468A106 106 0 0 1 921 618L883 655C872 666 865 680 865 700V857A314.600 314.600 0 0 0 865 229" stroke="#00ff00" strokeWidth="3" />
      <path d="M771 468 846 543" stroke="#0000d0" strokeWidth="2.500" />
    </g>
    {/* constraints */}
    <Star y={229} />
    <Star y={385} />
    <Star y={700} />
    <Star y={857} />
    <Arrow d="M765 385H789M780 377l9 8-9 8" />
    <Arrow d="M928 385H904M913 377l-9 8 9 8" />
    <Arrow d="M765 700H789M780 692l9 8-9 8" />
    <Arrow d="M928 700H904M913 692l-9 8 9 8" />
    <Arrow d="M771 468H796M787 460l9 8-9 8" />
    <Arrow d="M921 468H897M906 460l-9 8 9 8" />
    <Arrow d="M921 468V492M914 483l7 9 7-9" />
    <Arrow d="M921 618V594M914 603l7-9 7 9" />
    <Arrow d="M840 466l5 4-5 4M852 466l-5 4 5 4" />
    <Arrow d="M916 537l10 12M926 537l-10 12" />
    <path d="M888 412l7 2 3 4 4 6-6-3-2 3-5-4-5-1z" fill={CONSTRAINT} />
    <path d="M866 638l7 2 3 4 3 6-5-3-3 3-3-5-5-1z" fill={CONSTRAINT} />
    <path d="M745 470c-3-6 2-12 11-12" stroke={CONSTRAINT} strokeWidth="3" fill="none" />
    <Perp x={743} y={451} />
    <Perp x={780} y={525} />
    {points.map(([x, y]) => (
      <circle key={`${x}-${y}`} cx={x} cy={y} r="3.500" fill="#00ff00" />
    ))}
    {/* triad */}
    <path d="M496 924V896" stroke="#00d000" strokeWidth="2" />
    <rect x="494" y="902" width="4" height="12" fill="#00d000" />
    <path d="M496 924H523" stroke="#f01010" strokeWidth="2" />
    <rect x="514" y="922" width="7" height="4" fill="#f01010" />
    <circle cx="496" cy="924" r="3.500" fill="#1010ff" />
    <text x="498" y="916" fontSize="9" fill="#1010ff" fontFamily="Liberation Sans">Z</text>
    <text x="498" y="896" fontSize="9" fill="#20c020" fontFamily="Liberation Sans">Y</text>
    <text x="525" y="927" fontSize="9" fill="#f01010" fontFamily="Liberation Sans">X</text>
  </svg>
);

const Viewport = () => (
  <div className="flex-1 relative bg-linear-to-b from-[#b9cde3] to-[#e9ebee] overflow-hidden">
    <SketchView />
    <div className="absolute left-0 bottom-0 w-[115px] h-[19px] bg-white flex items-center text-[#333333]">
      <AppLogo />
      <span className="ml-[10px]">分析模型-三维*</span>
    </div>
  </div>
);

const App: React.FC = () => {
  return (
    <div className="w-[1920px] h-[1040px] flex flex-col overflow-hidden text-[12px] leading-[16px] font-['Noto_Sans','Noto_Sans_CJK_SC',sans-serif] bg-white">
      <TitleBar />
      <TabBar />
      <Ribbon />
      <div className="flex flex-1 min-h-0">
        <Sidebar />
        <div className="flex-1 flex flex-col min-w-0">
          <ViewToolbar />
          <Viewport />
        </div>
      </div>
      <footer className="h-[28px] shrink-0 bg-[#eeeff0] border-t border-[#a8a8a8] flex items-center justify-between pl-[6px] pr-[2px]">
        <span className="text-[#666666]">Preselected: ____________.Sketch2.;g14v3.vertex17 (0.000000,0.000000,20.011999)</span>
        <span className="text-[12.5px] text-[#333333]">1.2e+03 mm x 6.4e+02 mm</span>
      </footer>
      <div className="h-[9px] shrink-0 bg-[#12263d]" />
    </div>
  );
};

export default App;
